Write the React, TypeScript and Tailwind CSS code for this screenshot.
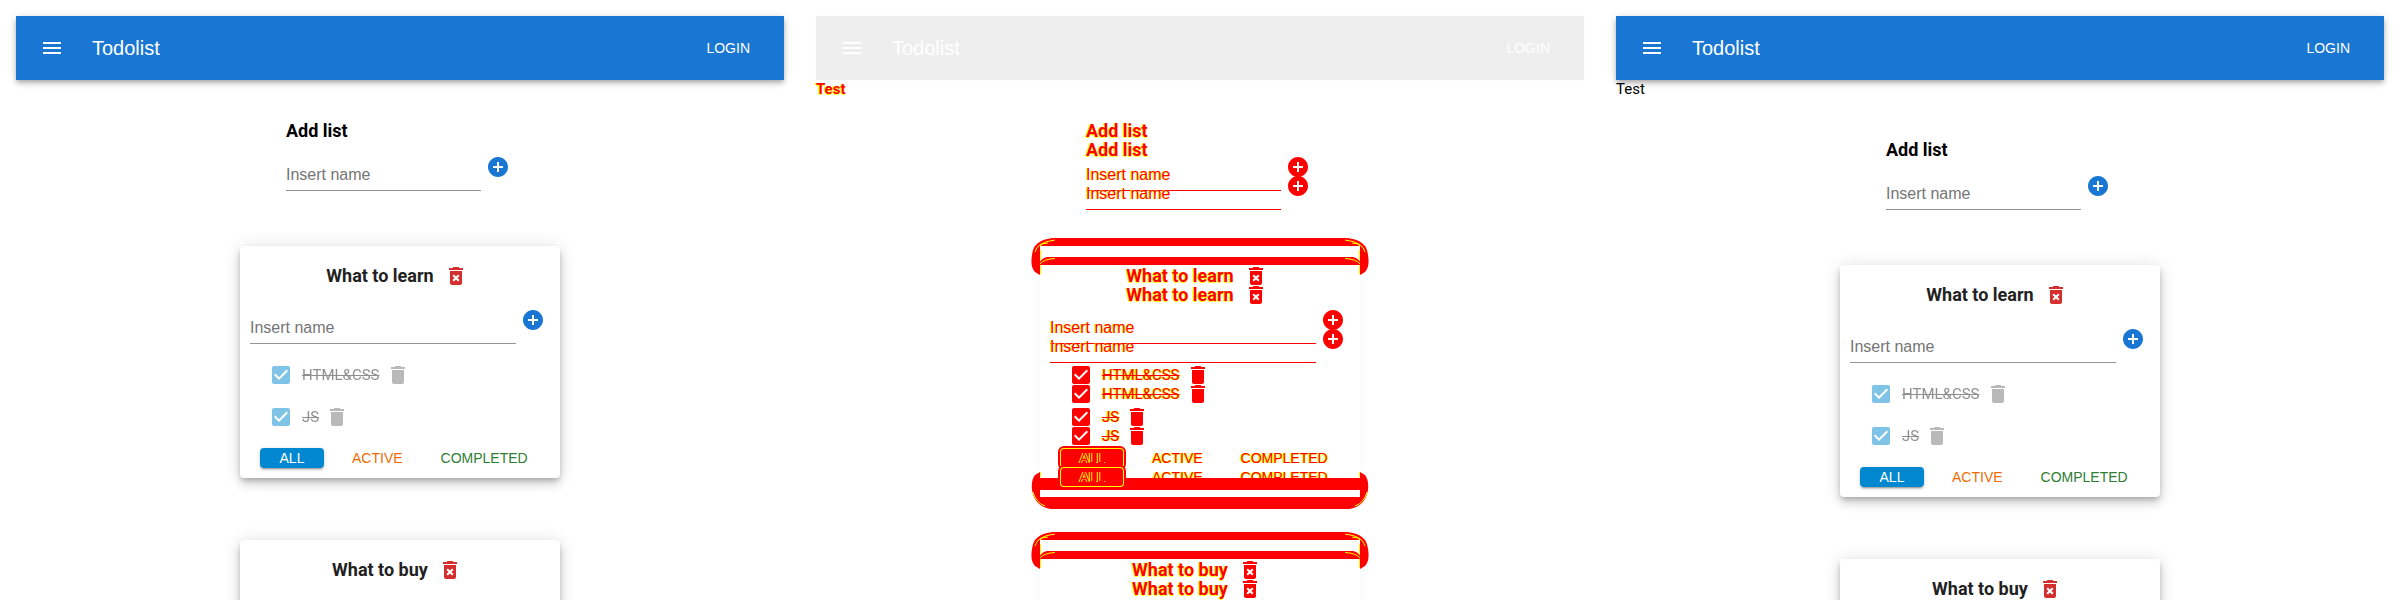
import React from 'react';

type Tone = 'normal' | 'diff';

const icons = {
  menu: 'M3 18h18v-2H3v2zm0-5h18v-2H3v2zm0-7v2h18V6H3z',
  add: 'M12 2C6.48 2 2 6.48 2 12s4.48 10 10 10 10-4.48 10-10S17.52 2 12 2zm5 11h-4v4h-2v-4H7v-2h4V7h2v4h4v2z',
  trash: 'M6 19c0 1.1.9 2 2 2h8c1.1 0 2-.9 2-2V7H6v12zM19 4h-3.5l-1-1h-5l-1 1H5v2h14V4z',
  trashX:
    'M6 19c0 1.1.9 2 2 2h8c1.1 0 2-.9 2-2V7H6v12zm2.46-7.12 1.41-1.41L12 12.59l2.12-2.12 1.41 1.41L13.41 14l2.12 2.12-1.41 1.41L12 15.41l-2.12 2.12-1.41-1.41L10.59 14l-2.13-2.12zM15.5 4l-1-1h-5l-1 1H5v2h14V4z',
  check:
    'M19 3H5c-1.11 0-2 .9-2 2v14c0 1.1.89 2 2 2h14c1.11 0 2-.9 2-2V5c0-1.1-.89-2-2-2zm-9 14l-5-5 1.41-1.41L10 14.17l7.59-7.59L19 8l-9 9z',
};

function Icon({ name, className = '' }: { name: keyof typeof icons; className?: string }) {
  return (
    <svg viewBox="0 0 24 24" className={`block size-6 shrink-0 fill-current ${className}`} aria-hidden="true">
      <path d={icons[name]} />
    </svg>
  );
}

const diffHeading = 'text-[#f00] [text-shadow:-1px_0_#ff0,0_1px_#ff0]';
const diffLabel = 'text-[#f00] [text-shadow:-1px_0_#ff0,1px_0_#ff0]';

function Header({ tone }: { tone: Tone }) {
  return (
    <header
      className={`flex h-16 items-center px-6 text-white ${
        tone === 'diff'
          ? 'bg-[#eeeeee] shadow-[0_1px_10px_rgba(0,0,0,0.02)]'
          : 'bg-[#1976d2] shadow-[0_2px_4px_-1px_rgba(0,0,0,0.2),0_4px_5px_rgba(0,0,0,0.14),0_1px_10px_rgba(0,0,0,0.12)]'
      }`}
    >
      <button type="button" aria-label="Menu" className="mr-7">
        <Icon name="menu" />
      </button>
      <h1 className="grow text-xl">Todolist</h1>
      <button type="button" className="px-2.5 text-sm uppercase">
        Login
      </button>
    </header>
  );
}

function AddForm({ tone, label, className = '' }: { tone: Tone; label: string; className?: string }) {
  const diff = tone === 'diff';
  return (
    <form className={`flex items-start ${className}`} onSubmit={(e) => e.preventDefault()}>
      <input
        aria-label={label}
        placeholder="Insert name"
        className={`h-9 min-w-0 grow border-b bg-transparent pt-1 text-base outline-none ${
          diff
            ? 'border-[#f00] [text-shadow:-1px_0_#ff0] placeholder:text-[#f00]'
            : 'border-[#949494] placeholder:text-[#757575]'
        }`}
      />
      <button type="submit" aria-label={label} className={`ml-1 ${diff ? 'text-[#f00]' : 'text-[#1976d2]'}`}>
        <Icon name="add" className="mx-px" />
      </button>
    </form>
  );
}

function Task({ tone, title }: { tone: Tone; title: string }) {
  const diff = tone === 'diff';
  return (
    <li className={`flex h-[42px] items-center ${diff ? 'text-[#f00]' : 'opacity-50'}`}>
      <label className="flex items-center gap-[9px]">
        <span className="grid">
          <input type="checkbox" defaultChecked className="col-start-1 row-start-1 size-6 appearance-none" />
          <Icon
            name="check"
            className={`pointer-events-none col-start-1 row-start-1 ${diff ? '' : 'text-[#0288d1]'}`}
          />
        </span>
        <span className={`font-[Roboto,sans-serif] text-[15px] line-through ${diff ? diffLabel : 'text-[#212121]'}`}>
          {title}
        </span>
      </label>
      <button type="button" aria-label={`Delete ${title}`} className={`ml-1.5 ${diff ? '' : 'text-[#757575]'}`}>
        <Icon name="trash" />
      </button>
    </li>
  );
}

/* Changed shadow areas above and below a card; the shifted copy carries the lower bracket. */
function DiffBands({ shifted }: { shifted: boolean }) {
  return (
    <>
      <svg
        viewBox="0 0 338 37"
        className="pointer-events-none absolute -top-2 -left-[9px] z-10 h-[37px] w-[338px]"
        aria-hidden="true"
      >
        {shifted ? (
          <>
            <path d="M16 0H322Q327 1 329 5V8H9V5Q11 1 16 0Z" fill="#f00" />
            <path d="M9 7Q13 2 24 1.500M329 7Q325 2 314 1.500" fill="none" stroke="#ff0" />
          </>
        ) : (
          <>
            <path
              d="M22 0H316Q336 2 337 17Q339 29 334 34L329 37V8H9V37L4 34Q-1 29 1 17Q2 2 22 0Z"
              fill="#f00"
            />
            <path
              d="M4 14Q6 4 24 2M9.500 36V12M9 8Q11 5 17 5M334 14Q332 4 314 2M328.500 36V12M329 8Q327 5 321 5"
              fill="none"
              stroke="#ff0"
            />
          </>
        )}
      </svg>
      <svg
        viewBox="0 0 338 37"
        className="pointer-events-none absolute -bottom-3 -left-[9px] z-10 h-[37px] w-[338px]"
        aria-hidden="true"
      >
        {shifted ? (
          <>
            <path
              d="M9 0V25H329V0L334 3Q338 8 337 18Q334 35 318 37H20Q4 35 1 18Q0 8 4 3Z"
              fill="#f00"
            />
            <path d="M2 20Q5 31 14 34M9.500 0V5M336 20Q333 31 324 34M328.500 0V5" fill="none" stroke="#ff0" />
          </>
        ) : (
          <path d="M9 25H329V37H9Z" fill="#f00" />
        )}
      </svg>
    </>
  );
}

type CardProps = { tone: Tone; title: string; shifted: boolean; tasks?: string[] };

function Card({ tone, title, shifted, tasks }: CardProps) {
  const diff = tone === 'diff';
  return (
    <section
      className={`relative min-h-[232px] w-80 rounded px-2.5 pt-[18px] pb-2.5 ${
        diff
          ? 'shadow-[0_0_12px_rgba(0,0,0,0.02)]'
          : 'bg-white shadow-[0_3px_5px_-1px_rgba(0,0,0,0.2),0_6px_10px_rgba(0,0,0,0.14),0_1px_18px_rgba(0,0,0,0.12)]'
      }`}
    >
      {diff && <DiffBands shifted={shifted} />}
      <div className="flex h-6 items-center justify-center gap-2.5 pr-1.5">
        <h2 className={`font-[Roboto,sans-serif] text-lg font-bold ${diff ? diffHeading : 'text-[#212121]'}`}>
          {title}
        </h2>
        <button type="button" aria-label={`Delete ${title}`} className={diff ? 'text-[#f00]' : 'text-[#d32f2f]'}>
          <Icon name="trashX" />
        </button>
      </div>
      {tasks && (
        <>
          <AddForm tone={tone} label={`Add to ${title}`} className="mt-5 pr-1" />
          <ul className="mt-2.5 pl-[19px]">
            {tasks.map((t) => (
              <Task key={t} tone={tone} title={t} />
            ))}
          </ul>
          <div className="mt-2.5 flex gap-[18px] pl-2.5 text-sm">
            <button
              type="button"
              className={`h-5 w-16 rounded ${
                diff
                  ? 'relative z-20 bg-[#f00] text-[#f00] [text-shadow:1px_0_#ff0,-1px_0_#ff0] shadow-[inset_0_0_0_1px_#ff0,0_0_0_2px_#f00]'
                  : 'bg-[#0288d1] text-white shadow-[0_3px_1px_-2px_rgba(0,0,0,0.2),0_2px_2px_rgba(0,0,0,0.14),0_1px_5px_rgba(0,0,0,0.12)]'
              }`}
            >
              ALL
            </button>
            <button type="button" className={`h-5 px-2.5 ${diff ? diffLabel : 'text-[#ed6c02]'}`}>
              ACTIVE
            </button>
            <button type="button" className={`h-5 px-2.5 ${diff ? diffLabel : 'text-[#2e7d32]'}`}>
              COMPLETED
            </button>
          </div>
        </>
      )}
    </section>
  );
}

function Page({ tone, test }: { tone: Tone; test: boolean }) {
  const diff = tone === 'diff';
  return (
    <div className="flex min-w-0 flex-col">
      {test && (
        <p
          className={`h-[19px] font-[Roboto,sans-serif] text-[15px] leading-[19px] ${
            diff ? `font-bold ${diffHeading}` : 'text-black'
          }`}
        >
          Test
        </p>
      )}
      <div className="flex flex-col items-center pt-[37px]">
        <div className="w-[228px]">
          <h2 className={`font-[Roboto,sans-serif] text-lg font-bold ${diff ? diffHeading : 'text-black'}`}>
            Add list
          </h2>
          <AddForm tone={tone} label="Add list" className="mt-2.5 pr-[3px]" />
        </div>
        <div className="mt-[55px] flex flex-col gap-[62px]">
          <Card tone={tone} shifted={test} title="What to learn" tasks={['HTML&CSS', 'JS']} />
          <Card tone={tone} shifted={test} title="What to buy" />
        </div>
      </div>
    </div>
  );
}

export default function App() {
  return (
    <main className="grid h-screen grid-cols-3 overflow-hidden bg-white font-['Liberation_Sans',sans-serif]">
      <div className="p-4">
        <Header tone="normal" />
        <Page tone="normal" test={false} />
      </div>
      <div className="p-4">
        <Header tone="diff" />
        <div className="grid">
          <div className="col-start-1 row-start-1">
            <Page tone="diff" test={false} />
          </div>
          <div className="col-start-1 row-start-1">
            <Page tone="diff" test />
          </div>
        </div>
      </div>
      <div className="p-4">
        <Header tone="normal" />
        <Page tone="normal" test />
      </div>
    </main>
  );
}
